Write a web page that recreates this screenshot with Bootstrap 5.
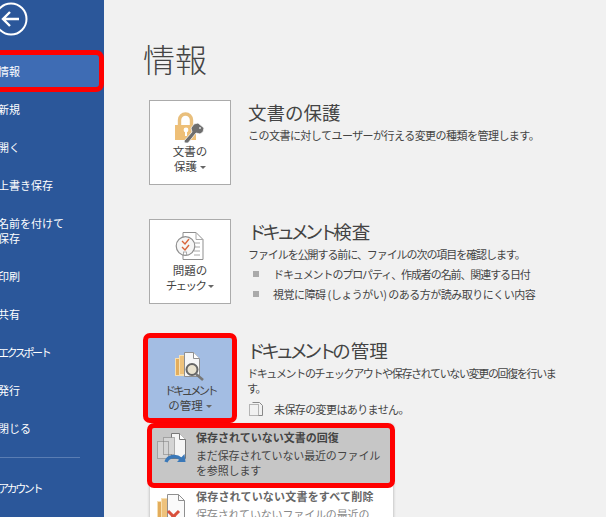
<!DOCTYPE html>
<html lang="ja">
<head>
<meta charset="utf-8">
<title>情報</title>
<link rel="stylesheet" href="https://cdn.jsdelivr.net/npm/bootstrap@5.3.0/dist/css/bootstrap.min.css">
<style>
html,body{height:517px;overflow:hidden}
body{background:#f1f1f1;font-family:"Noto Sans CJK JP","Liberation Sans",sans-serif;color:#444;font-size:11px;line-height:15px}
.shell{width:606px;height:517px;overflow:hidden}
.rail{width:104px;height:517px;background:#2b579a;color:#fff;flex:none;font-size:11px}
.back{height:42px;padding-top:2px}
.back svg{display:block;margin-left:-6px}
.rail-list{margin:10px 0 0;padding:0;list-style:none}
.rail-item{height:38px;margin-left:-2px;display:flex;align-items:center}
.rail-tall{height:53px}
.rail-now{margin-left:-12px;width:116px;height:42px;margin-top:-2px;margin-bottom:-2px;background:#3e6cb4;border:5px solid #f00;border-radius:8px;padding-left:5px}
.rail-rule{height:1px;background:#5a7db3;margin:10px 0 11px;width:80px}
.rail-wide{letter-spacing:-2.4px}
.pane{flex:1;min-width:0;padding:0 0 0 41px;position:relative}
.pane-title{font-size:32px;line-height:40px;margin:38px 0 0 -2px;color:#444;font-weight:300}
.info{display:flex;margin-left:4px}
.info-a{margin-top:22px;height:119px}
.info-b{height:119px}
.tile{width:82px;height:85px;background:#fff;border:1px solid #ababab;flex:none;display:flex;flex-direction:column;align-items:center;padding-top:11px;font-size:11.5px;line-height:15px;text-align:center;color:#444}
.tile svg{display:block;margin-bottom:1px}
.tile-on{width:84px;margin-left:-1px;height:80px;background:#a3bde3;border:0;padding-top:13px;outline:5px solid #f00;border-radius:2px}
.tile .caret{display:inline-block;border:3px solid transparent;border-top-color:#666;border-bottom:0;vertical-align:middle;margin-left:3px}
.body{padding-left:17px;min-width:0}
.tile-on + .body{padding-left:15px}
.head{font-size:18.5px;line-height:24px;margin:0 0 4px;color:#444;font-weight:400;white-space:nowrap}
.kana{letter-spacing:-4.3px}
.kana-s{letter-spacing:-1.6px}
.kana-t{letter-spacing:-3px}
.text{margin:0;font-size:11px;line-height:15px;white-space:nowrap}
.fit-a{letter-spacing:-.53px}
.fit-b{letter-spacing:-1.07px}
.fit-c{letter-spacing:-1.35px}
.bul{list-style:none;margin:2px 0 0;padding:0}
.bul li{display:flex;align-items:center;height:20px;white-space:nowrap}
.bul i{display:block;width:6px;height:6px;background:#aaa;margin:0 14px 0 5px}
.bul-a{letter-spacing:-1.1px}
.bul-b{letter-spacing:-.5px}
.state{display:flex;align-items:center;margin-top:5px;letter-spacing:-.6px}
.state svg{margin-right:10px;margin-left:1px}
.drop{position:absolute;left:46px;top:425px;width:243px;height:100px;background:#fff;box-shadow:0 0 3px rgba(0,0,0,.3)}
.drop-row{display:flex;padding:0 0 0 7px;height:60px}
.drop-row svg{flex:none;margin-top:5px}
.drop-on{position:relative;height:65px;margin:-2px -3px 0;width:248px;background:#c6c6c6;border:5px solid #f00;border-radius:7px;padding:0 0 0 5px;z-index:2}
.drop-txt{padding-left:9px;white-space:nowrap}
.drop-on .drop-txt{padding-top:1px}
.drop-t{font-weight:700;color:#444;line-height:17px}
.drop-d{line-height:15px;margin-top:2px;letter-spacing:-.15px}
.drop-low .drop-t{color:#666;letter-spacing:.2px}
.drop-low .drop-d{color:#888}
</style>
</head>
<body>
<div class="shell d-flex">
  <nav class="rail">
    <div class="back">
      <svg width="34" height="34" viewBox="0 0 34 34" fill="none" stroke="#fff" stroke-width="2"><circle cx="17" cy="17" r="15.5"/><path d="M9 17H25M16 10l-7 7 7 7" stroke-width="2.4"/></svg>
    </div>
    <ul class="rail-list">
      <li class="rail-item rail-now">情報</li>
      <li class="rail-item">新規</li>
      <li class="rail-item">開く</li>
      <li class="rail-item">上書き保存</li>
      <li class="rail-item rail-tall">名前を付けて<br>保存</li>
      <li class="rail-item">印刷</li>
      <li class="rail-item">共有</li>
      <li class="rail-item rail-wide">エクスポート</li>
      <li class="rail-item">発行</li>
      <li class="rail-item">閉じる</li>
      <li class="rail-rule"></li>
      <li class="rail-item rail-wide">アカウント</li>
    </ul>
  </nav>
  <main class="pane">
    <h1 class="pane-title">情報</h1>
    <section class="info info-a">
      <div class="tile">
        <svg width="30" height="31" viewBox="0 0 30 31"><path d="M4.5 14V8a6 6 0 0 1 12 0v6" fill="none" stroke="#e9bf7c" stroke-width="3.4"/><rect x="0" y="13" width="21" height="15" fill="#eebf77"/><circle cx="11" cy="18" r="2.4" fill="#fff"/><rect x="10" y="19" width="2" height="5" fill="#fff"/><path d="M23 11l6 5-1 4-3 2-4-1-8 10h-3l-1-2 8-9-1-4 3-4z" fill="#6e6e6e" stroke="#f7f7f7" stroke-width=".8"/><circle cx="25" cy="16" r="1" fill="#ddd"/></svg>
        <span>文書の<br>保護<span class="caret"></span></span>
      </div>
      <div class="body">
        <h2 class="head">文書の保護</h2>
        <p class="text fit-a">この文書に対してユーザーが行える変更の種類を管理します。</p>
      </div>
    </section>
    <section class="info info-b">
      <div class="tile">
        <svg width="30" height="31" viewBox="0 0 30 31"><path d="M8 1.5h13l7 7v20H8z" fill="#fff" stroke="#8f8f8f"/><path d="M21 1.5v7h7M19 12h6M19 16h6M19 20h6M19 24h6" fill="none" stroke="#a8a8a8"/><circle cx="10.5" cy="15" r="9.3" fill="#f6f6f6" stroke="#8f8f8f" stroke-width="1.2"/><path d="M7 10l3 3 4-5M7 16l3 3 4-5" fill="none" stroke="#d8663c" stroke-width="1.4"/><rect x="8.5" y="21" width="3" height="3" fill="#fff" stroke="#999" stroke-width=".8"/></svg>
        <span>問題の<br><span class="kana-s">チェック</span><span class="caret"></span></span>
      </div>
      <div class="body">
        <h2 class="head"><span class="kana">ドキュメント</span>検査</h2>
        <p class="text fit-b">ファイルを公開する前に、ファイルの次の項目を確認します。</p>
        <ul class="bul">
          <li class="bul-a"><i></i>ドキュメントのプロパティ、作成者の名前、関連する日付</li>
          <li class="bul-b"><i></i>視覚に障碍 (しょうがい) のある方が読み取りにくい内容</li>
        </ul>
      </div>
    </section>
    <section class="info">
      <div class="tile tile-on">
        <svg width="30" height="31" viewBox="0 0 30 31"><rect x=".5" y="7.5" width="14" height="17" fill="#e3ad5c" stroke="#f7dfb0"/><rect x="4.5" y="4.5" width="14" height="19" fill="#eec27c" stroke="#f7dfb0"/><path d="M9.500 1.500h9l6 6v18h-15z" fill="#f6f6f6" stroke="#8f8f8f"/><path d="M18.500 1.500v6h6" fill="#fff" stroke="#8f8f8f"/><circle cx="17" cy="18.500" r="5.500" fill="#e9e2cf" stroke="#666" stroke-width="2"/><path d="M21 23l7 6" stroke="#777" stroke-width="2.600"/></svg>
        <span><span class="kana-t">ドキュメント</span><br>の管理<span class="caret"></span></span>
      </div>
      <div class="body">
        <h2 class="head"><span class="kana">ドキュメント</span>の管理</h2>
        <p class="text fit-c">ドキュメントのチェックアウトや保存されていない変更の回復を行いま<br>す。</p>
        <div class="state">
          <svg width="16" height="16" viewBox="0 0 16 16" fill="none" stroke="#777"><path d="M1.500 3.500h9v11h-9z" stroke-dasharray="1 1"/><path d="M4.500 1.500h7l3 3v10h-4" stroke="#888"/></svg>
          未保存の変更はありません。
        </div>
      </div>
    </section>
    <div class="drop">
      <div class="drop-row drop-on">
        <svg width="30" height="32" viewBox="0 0 30 32" fill="none"><path d="M14.500 .5h8l6 6v19h-14z" fill="#f5f5f5" stroke="#777"/><path d="M22.500 .5v6h6" fill="#fff" stroke="#777"/><path d="M6.500 4.500h11v17h-11zM.5 8.500h11v17H.5z" fill="#d4d4d4" stroke="#777" stroke-dasharray="1 1"/><path d="M9 29c2-6 10-7 15-3" stroke="#3a78b8" stroke-width="3.400"/><path d="M20 29h8.500l-1-8z" fill="#3a78b8"/></svg>
        <div class="drop-txt">
          <div class="drop-t">保存されていない文書の回復</div>
          <div class="drop-d">まだ保存されていない最近のファイル<br>を参照します</div>
        </div>
      </div>
      <div class="drop-row drop-low">
        <svg width="30" height="30" viewBox="0 0 30 30" fill="none"><rect x=".5" y="8.500" width="14" height="17" fill="#e3ad5c" stroke="#f7dfb0"/><rect x="4.500" y="5.500" width="14" height="19" fill="#eec27c" stroke="#f7dfb0"/><path d="M10.500 1.500h11l6 6v19h-17z" fill="#fafafa" stroke="#8f8f8f"/><path d="M21.500 1.500v6h6" stroke="#8f8f8f"/><path d="M11 18l11 11M22 18L11 29" stroke="#d9503c" stroke-width="3"/></svg>
        <div class="drop-txt">
          <div class="drop-t">保存されていない文書をすべて削除</div>
          <div class="drop-d">保存されていないファイルの最近の</div>
        </div>
      </div>
    </div>
  </main>
</div>
<script src="https://cdn.jsdelivr.net/npm/bootstrap@5.3.0/dist/js/bootstrap.bundle.min.js"></script>
</body>
</html>
